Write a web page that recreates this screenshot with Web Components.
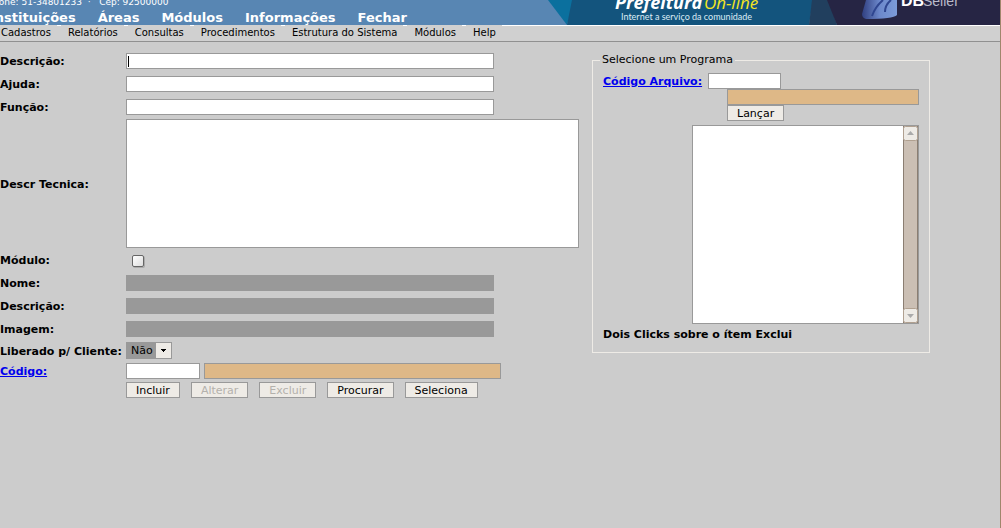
<!DOCTYPE html>
<html lang="pt-BR">
<head>
<meta charset="utf-8">
<title>Cadastro de Itens</title>
<style>
body{margin:0;min-height:100vh;background:#ccc;color:#000;font:11px/14px "DejaVu Sans",sans-serif;overflow:hidden;box-sizing:border-box;border-right:1px solid #a0866c}
</style>
</head>
<body>
<app-banner></app-banner>
<menu-bar>
<menu-item>Cadastros</menu-item><menu-item>Relatórios</menu-item><menu-item>Consultas</menu-item><menu-item>Procedimentos</menu-item><menu-item>Estrutura do Sistema</menu-item><menu-item>Módulos</menu-item><menu-item>Help</menu-item>
</menu-bar>
<page-columns>
<item-form></item-form>
<group-box caption="Selecione um Programa"><program-picker></program-picker></group-box>
</page-columns>
<script>
const controls = `
*{box-sizing:border-box}
input,button,select,textarea{font:inherit;color:inherit;margin:0;border:1px solid #999;border-radius:0;outline:0}
input:not([type=checkbox]){height:16px;padding:0 2px;background:#fff}
input.tan{background:#deb887}
input.off{background:#999}
button{height:16px;padding:1px 9px 0;background:#eeebe6;line-height:14px;white-space:nowrap}
button:disabled{color:#b4b1ac}
a,label,strong{font-weight:bold;white-space:nowrap;padding-top:2px}
a{color:#00e}`;
const define = (name, css, html) => customElements.define(name, class extends HTMLElement {
  constructor(){
    super();
    this.attachShadow({mode:'open'}).innerHTML = `<style>${css}</style>${html}`;
  }
  connectedCallback(){
    const legend = this.shadowRoot.querySelector('legend');
    if (legend) legend.textContent = this.getAttribute('caption');
  }
});

define('app-banner', `
:host{display:flex;justify-content:space-between;height:25px;overflow:hidden;background:#5886b3;color:#fff;margin-right:-1px}
.left{display:flex;flex-direction:column;justify-content:flex-end;flex:1;margin-left:-10px;white-space:nowrap}
p{margin:0 0 2px 4px;font-size:9px;line-height:12px;white-space:pre}
nav{display:flex;gap:22px;font-weight:bold;font-size:13px;line-height:15px}
a{color:inherit;text-decoration:none}
svg{display:block;flex:none}`, `
<div class="left"><p>Fone: 51-34801233  ·   Cep: 92500000</p>
<nav><a href="#">Instituições</a><a href="#">Áreas</a><a href="#">Módulos</a><a href="#">Informações</a><a href="#">Fechar</a></nav></div>
<svg width="461" height="25" viewBox="540 0 461 25">
<defs><linearGradient id="g" x2="1"><stop stop-color="#303f80"/><stop offset=".5" stop-color="#6c88cb"/><stop offset="1" stop-color="#7c9bd8"/></linearGradient></defs>
<path fill="#0b709e" d="M548 0h26l-7 25z"/>
<path fill="#13547d" d="M572 0h241l-4 25H567z"/>
<path fill="#213f5e" d="M812 0h17l8 25h-28z"/>
<path fill="#262544" d="M827 0h174v25H837z"/>
<path fill="url(#g)" d="M866 0h31v15q-4 4-31 4-4-1-4-5z"/>
<path fill="none" stroke="#2f4690" stroke-width="2" d="M872 16q3-9 11-16M885 12q0-7 6-12"/>
<text x="615" y="9" fill="#fff" font-family="Open Sans" font-size="18" font-weight="bold" font-style="italic">Prefeitura</text>
<text x="704" y="9" fill="#f4e522" font-family="Open Sans" font-size="17" font-style="italic">On-line</text>
<text x="621" y="20" fill="#dcecf5" font-family="Lato" font-size="9">Internet a serviço da comunidade</text>
<text x="901" y="6" fill="#fff" font-family="Liberation Sans" font-size="16" font-weight="bold">DB</text>
<text x="923" y="6" fill="#b9bbca" font-family="Liberation Sans" font-size="14">Seller</text>
</svg>`);

define('menu-bar', `
:host{display:flex;gap:4px;height:17px;box-sizing:border-box;border-top:1px solid #fff;border-bottom:1px solid #909090;background:#d0d0d0;margin-left:-6px}`, `<slot></slot>`);
define('menu-item', `
:host{display:block;margin-top:-1px;height:15px;padding:0 6px 0 7px;background:#d0d0d0;font-size:10px;line-height:15px;white-space:nowrap}
a{color:#000;text-decoration:none}`, `<a href="#"><slot></slot></a>`);
define('page-columns', `:host{display:flex;align-items:flex-start;gap:13px;padding-top:7px}`, `<slot></slot>`);

define('item-form', controls + `
:host{display:block;flex:none}
form{display:grid;grid-template-columns:126px auto;grid-template-rows:23px 23px 23px 131px 22px 23px 23px 23px 21px 19px 19px;align-items:center}
.w{width:368px}
#d{background:linear-gradient(#000,#000) 1px 2px/1px 11px no-repeat #fff}
textarea{display:block;width:453px;height:129px;resize:none;background:#fff}
input[type=checkbox]{appearance:none;width:12px;height:12px;margin:2px 0 0 6px;border:1px solid #666;border-radius:2px;background:linear-gradient(135deg,#fff,#ddd);box-shadow:1px 1px #aaa}
.sel{position:relative;width:46px;height:17px}
select{appearance:none;display:block;width:46px;height:17px;padding:0 0 0 4px;background:#999;line-height:15px}
.sel svg{position:absolute;right:1px;top:1px;pointer-events:none}
.pair{display:flex;gap:4px}
.code{width:74px}.desc{width:297px}
.buttons{display:flex;gap:11px}`, `
<form>
<label for="d">Descrição:</label><input id="d" class="w">
<label for="a">Ajuda:</label><input id="a" class="w">
<label for="f">Função:</label><input id="f" class="w">
<label for="t">Descr Tecnica:</label><textarea id="t"></textarea>
<label for="m">Módulo:</label><input id="m" type="checkbox">
<label for="n">Nome:</label><input id="n" class="w off" disabled>
<label for="e">Descrição:</label><input id="e" class="w off" disabled>
<label for="i">Imagem:</label><input id="i" class="w off" disabled>
<label for="l">Liberado p/ Cliente:</label><div class="sel"><select id="l"><option>Não</option><option>Sim</option></select>
<svg width="15" height="15"><path fill="#eeebe6" d="M0 0h15v15H0z"/><path d="M5 6h5v1H9v1H8v1H7V8H6V7H5z"/></svg></div>
<a id="c" href="#">Código:</a><div class="pair"><input class="code" aria-labelledby="c"><input class="desc tan" aria-labelledby="c" readonly></div>
<span></span><div class="buttons"><button type="button">Incluir</button><button type="button" disabled>Alterar</button><button type="button" disabled>Excluir</button><button type="button">Procurar</button><button type="button">Seleciona</button></div>
</form>`);

define('group-box', `
:host{display:block;flex:none;margin-top:4px}
fieldset{margin:0;padding:6px 10px 10px;border:1px solid #eeebe6;box-sizing:border-box;width:338px}
legend{padding:0 2px;margin-left:-3px;line-height:14px}`, `<fieldset><legend></legend><slot></slot></fieldset>`);

define('scroll-bar', `:host{display:block;width:15px}
div{display:flex;flex-direction:column;height:100%;box-sizing:border-box;background:#cbbfb4;border:solid #8b7e72;border-width:0 1px}
svg{display:block;margin:0 -1px}.gap{flex:1}`, `
<div><svg width="15" height="15"><rect x=".5" y=".5" width="14" height="14" rx="2" fill="#eeebe6" stroke="#b0a090"/><path fill="#aaa" d="M4 9h7L7.500 5z"/></svg>
<span class="gap"></span>
<svg width="15" height="15"><rect x=".5" y=".5" width="14" height="14" rx="2" fill="#eeebe6" stroke="#b0a090"/><path fill="#aaa" d="M4 6h7L7.500 10z"/></svg></div>`);

define('program-picker', controls + `
:host{display:flex;flex-direction:column}
.top{display:flex;gap:6px;height:16px;align-items:center}
.code{width:73px}
.under{display:flex;flex-direction:column;align-items:flex-start;margin-left:124px}
.desc{width:192px}
.list{display:flex;align-self:flex-end;width:227px;height:199px;margin:4px 0 2px;border:1px solid #999;background:#fff}
.list select{flex:1;min-width:0;height:100%;border:0;background:#fff;overflow:hidden}`, `
<div class="top"><a id="c" href="#">Código Arquivo:</a><input class="code" aria-labelledby="c"></div>
<div class="under"><input class="desc tan" aria-labelledby="c" readonly><button type="button">Lançar</button></div>
<div class="list"><select size="12" aria-label="Programas"></select><scroll-bar></scroll-bar></div>
<strong>Dois Clicks sobre o ítem Exclui</strong>`);
</script>
</body>
</html>
